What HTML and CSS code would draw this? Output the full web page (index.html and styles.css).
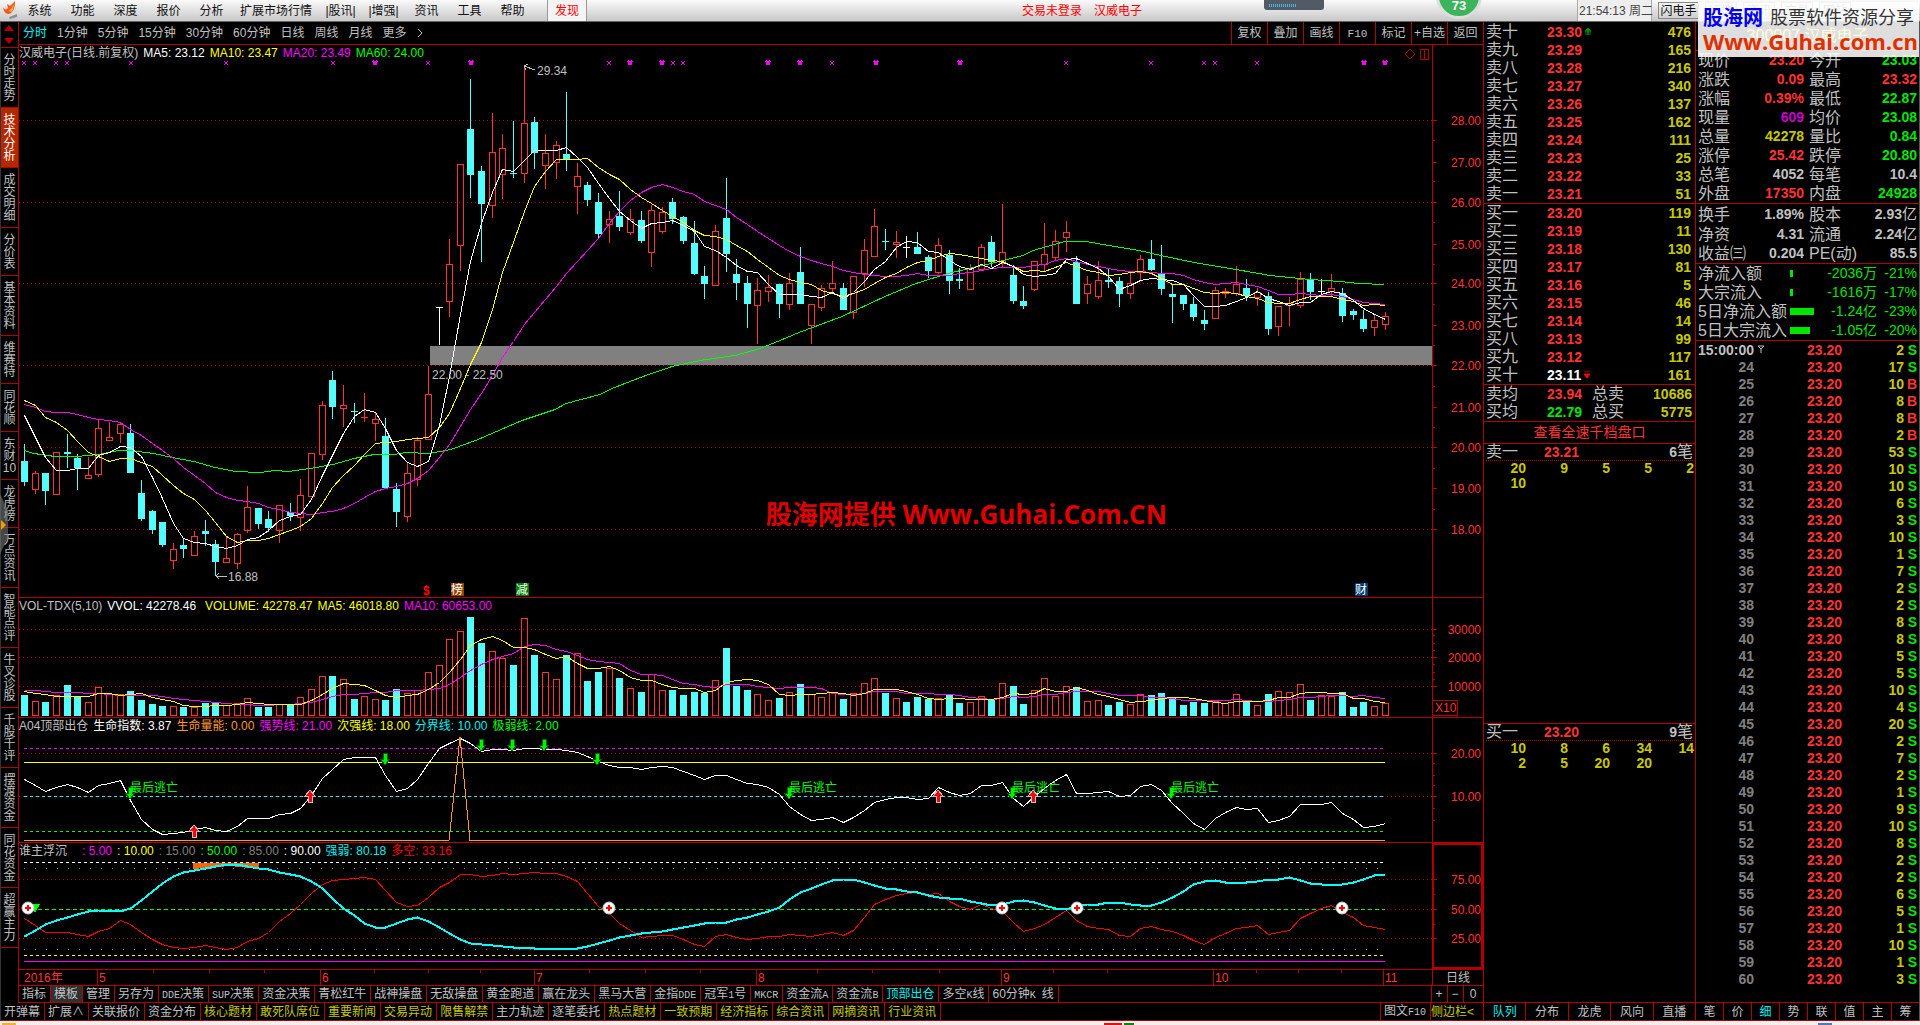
FILE: index.html
```html
<!DOCTYPE html>
<html lang="zh-CN">
<head>
<meta charset="utf-8">
<meta name="viewport" content="width=device-width, initial-scale=1">
<title>汉威电子 日线</title>
<link rel="stylesheet" href="styles.css">
</head>
<body>
<header class="topbar">
  <svg class="logo" viewBox="0 0 16 18" width="16" height="18"><path d="M2 7 13 4l2 9-9 4z" fill="#d8dade"/><path d="M7 16l8-3v3l-7 2z" fill="#8b8f94"/><path d="M1 6c1 3 4 3 5 1L5 3l3 2 5-5c0 6-1 9-4 12-3 2-7 1-8-6z" fill="#f05a14"/><path d="M7 9c2-1 4-4 5-6 0 4-1 7-3 8-1 0-2-1-2-2z" fill="#ffa040"/></svg>
  <nav class="menu">
    <button>系统</button><button>功能</button><button>深度</button><button>报价</button><button>分析</button><button class="wide">扩展市场行情</button><button>|股讯|</button><button>|增强|</button><button>资讯</button><button>工具</button><button>帮助</button><button class="found">发现</button>
  </nav>
  <p class="account"><span>交易未登录</span><span>汉威电子</span></p>
  <div class="top-right">
    <div class="led"><i></i></div>
    <div class="score"><span>73</span></div>
    <time class="clock">21:54:13 周二</time>
    <button class="trader">闪电手</button>
    <div class="ghosts"><button>行情</button><button>资讯</button><button>交易</button><button>网站</button></div>
  </div>
  <div class="brand">
    <p class="brand-line"><b>股海网</b><span>股票软件资源分享</span></p>
    <p class="brand-url">Www.Guhai.com.cn</p>
  </div>
</header>

<main class="main">
  <div class="left">
    <nav class="side">
      <div class="arrows"><svg viewBox="0 0 14 24" width="14" height="24"><path d="M7 3l5 6H2zM7 22l-5-6h10z" fill="#b40000"/></svg></div>
      <button>分时走势</button><button class="on">技术分析</button><button>成交明细</button><button>分价表</button><button>基本资料</button><button>维赛特</button><button>同花顺</button><button>东财10</button><button>龙虎榜</button><button>万点资讯</button><button>智能点评</button><button>牛叉诊股</button><button>千股千评</button><button>摆渡资金</button><button>同花资金</button><button>超赢主力</button>
      <svg class="pull" viewBox="0 0 10 60" width="10" height="60"><path d="M0 0l8 16v28l-8 16z" fill="#777" opacity=".6"/><path d="M1 26l5 5-5 5z" fill="#f0a000"/></svg>
    </nav>
    <section class="chart">
      <div class="periods">
        <button class="on">分时</button><button>1分钟</button><button>5分钟</button><button>15分钟</button><button>30分钟</button><button>60分钟</button><button>日线</button><button>周线</button><button>月线</button><button>更多</button><button class="more"><svg viewBox="0 0 6 10" width="6" height="10"><path d="M1 1l4 4-4 4" fill="none" stroke="#c0c0c0"/></svg></button>
        <div class="tools"><button>复权</button><button>叠加</button><button>画线</button><button><span class="lat">F10</span></button><button>标记</button><button>+自选</button><button>返回</button></div>
      </div>
      <div class="panes">
        <div class="pane"><svg id="price"></svg><p class="legend"><span>汉威电子(日线.前复权)</span><span class="w">MA5: 23.12</span><span class="y">MA10: 23.47</span><span class="m">MA20: 23.49</span><span class="g">MA60: 24.00</span></p><p class="stamp">股海网提供 Www.Guhai.Com.CN</p></div>
        <div class="pane"><svg id="volume"></svg><p class="legend"><span>VOL-TDX(5,10)</span><span class="w">VVOL: 42278.46</span><span class="y apart">VOLUME: 42278.47</span><span class="y">MA5: 46018.80</span><span class="m">MA10: 60653.00</span></p></div>
        <div class="pane"><svg id="life"></svg><p class="legend"><span>A04顶部出仓</span><span class="w">生命指数: 3.87</span><span class="o">生命量能: 0.00</span><span class="m">强势线: 21.00</span><span class="y">次强线: 18.00</span><span class="c">分界线: 10.00</span><span class="g">极弱线: 2.00</span></p></div>
        <div class="pane"><svg id="wave"></svg><p class="legend"><span>谁主浮沉</span><span class="m apart far">: 5.00</span><span class="y">: 10.00</span><span class="k">: 15.00</span><span class="g">: 50.00</span><span class="k">: 85.00</span><span class="w">: 90.00</span><span class="c">强弱: 80.18</span><span class="r">多空: 33.16</span></p></div>
        <div class="pane"><svg id="dates"></svg></div>
      </div>
      <div class="tabs">
        <button>指标</button><button class="lit">模板</button><button>管理</button><button>另存为</button><button><span class="lat">DDE</span>决策</button><button><span class="lat">SUP</span>决策</button><button>资金决策</button><button>青松红牛</button><button>战神操盘</button><button>无敌操盘</button><button>黄金跑道</button><button>赢在龙头</button><button>黑马大营</button><button>金指<span class="lat">DDE</span></button><button>冠军<span class="lat">1</span>号</button><button><span class="lat">MKCR</span></button><button>资金流<span class="lat">A</span></button><button>资金流<span class="lat">B</span></button><button class="c">顶部出仓</button><button>多空<span class="lat">K</span>线</button><button>60分钟<span class="lat">K </span>线</button>
        <div class="zoomers"><button>+</button><button>−</button><button>0</button></div>
      </div>
    </section>
    <div class="tabs tabs-wide">
      <button>开弹幕</button><button>扩展∧</button><button>关联报价</button><button>资金分布</button><button class="y">核心题材</button><button class="y">敢死队席位</button><button class="y">重要新闻</button><button class="y">交易异动</button><button class="y">限售解禁</button><button>主力轨迹</button><button>逐笔委托</button><button class="y">热点题材</button><button class="y">一致预期</button><button class="y">经济指标</button><button class="y">综合资讯</button><button class="y">网摘资讯</button><button class="y">行业资讯</button>
      <div class="side-toggle"><button>图文<span class="lat">F10</span></button><button class="y">侧边栏&lt;</button></div>
    </div>
  </div>

  <section class="book">
    <table id="asks"></table>
    <table id="bids"></table>
    <table id="averages"></table>
    <a class="depth" href="#depth">查看全速千档盘口</a>
    <div class="queue" id="askQueue"></div>
    <div class="queue" id="bidQueue"></div>
    <div class="tabs even"><button class="c">队列</button><button>分布</button><button>龙虎</button><button>风向</button><button>直播</button></div>
  </section>

  <section class="info">
    <h1 class="stock">300007 汉威电子</h1>
    <table id="quote"></table>
    <table id="basics"></table>
    <table id="flows"></table>
    <table id="ticks"></table>
    <div class="tabs even"><button>笔</button><button>价</button><button class="c">细</button><button>势</button><button>联</button><button>值</button><button>主</button><button>筹</button></div>
  </section>
</main>
<footer class="strip"><i class="s1"></i><i class="s2"></i><i class="s3"></i><i class="s4"></i></footer>
<script src="app.js"></script>
</body>
</html>
```
FILE: styles.css
```css
* { box-sizing: border-box; }
html, body { margin: 0; }
body {
  min-height: 100vh; display: grid; grid-template-rows: 22px 1fr 4px;
  background: #000; color: #c0c0c0;
  font: 12px/16px "Liberation Sans", "Noto Sans CJK SC", sans-serif;
}
p, h1 { margin: 0; }
button { margin: 0; padding: 0; border: 0; background: none; color: inherit; font: inherit; white-space: nowrap; }
table { border-collapse: collapse; width: 100%; table-layout: fixed; }
td, th { padding: 0; font-weight: normal; text-align: left; white-space: nowrap; overflow: hidden; }
.lat { font: 11px/16px "Liberation Mono", monospace; }
.w { color: #fff; } .y { color: #ff0; } .m { color: #f0f; } .g { color: #0f0; }
.o { color: #ff9632; } .c { color: #00f0f0; } .k { color: #808080; } .r { color: #f00; }

.topbar { position: relative; display: flex; background: linear-gradient(#fafafa, #c8c8c8); border-bottom: 1px solid #666; color: #111; }
.logo { margin: 1px 0 0 2px; flex: none; }
.menu { display: flex; }
.menu button { width: 43px; }
.menu .wide { width: 86px; }
.menu .found { width: 40px; margin-left: 13px; background: #f4f4f4; border: 1px solid #999; border-width: 0 1px; color: #f00; }
.account { display: flex; gap: 12px; margin-left: auto; padding-top: 3px; color: #f00; }
.top-right { width: 778px; padding-left: 122px; display: flex; }
.led { width: 60px; height: 10px; background: #525a66; border-radius: 0 0 3px 3px; padding: 4px 5px; }
.led i { display: block; width: 28px; height: 3px; background: repeating-linear-gradient(90deg, #4ab4e0 0 1px, #525a66 1px 2px); }
.score { width: 48px; height: 21px; margin-left: 112px; overflow: hidden; display: flex; align-items: flex-end; z-index: 2; }
.score span { width: 46px; height: 46px; flex: none; border-radius: 50%; border: 3px solid #d8e0d8; background: #3cb45c; color: #fff; font-size: 13px; font-weight: bold; text-align: center; padding-top: 22px; margin-bottom: 2px; }
.clock { width: 75px; margin-left: 93px; padding: 3px 1px; border: 1px solid #aaa; border-width: 0 1px; background: #eee; color: #444; white-space: nowrap; }
.trader { width: 41px; margin: 2px 0 2px 6px; border: 1px solid #888; }
.ghosts { display: flex; gap: 6px; margin: 2px 0 2px 6px; color: #666; }
.ghosts button { width: 32px; border: 1px solid #999; }
.brand { position: absolute; right: 1px; top: 2px; width: 221px; height: 55px; padding: 5px; background: rgba(255,255,255,.87); z-index: 3; }
.brand-line { display: flex; justify-content: space-between; align-items: center; height: 22px; }
.brand-line b { color: #00e; font-size: 20px; }
.brand-line span { color: #333; font-size: 18px; }
.brand-url { color: #e03000; font: bold 22px/24px "Open Sans", "Liberation Sans", sans-serif; text-align: center; white-space: nowrap; }

.main { display: flex; min-width: 0; }
.left { flex: 1; min-width: 0; display: grid; grid-template: minmax(0, 1fr) 18px / 19px minmax(0, 1fr); }
.side { position: relative; display: flex; flex-direction: column; border-left: 1px solid #333; border-right: 1px solid #b40000; }
.arrows { height: 26px; padding-left: 1px; border-bottom: 1px solid #b40000; }
.side button { padding: 6px 1px 5px; width: 17px; line-height: 12px; white-space: normal; word-break: break-all; border-bottom: 1px solid #b40000; }
.side .on { background: #b42800; color: #fff; }
.side .pull { position: absolute; left: -1px; top: 472px; }
.chart { display: flex; flex-direction: column; min-width: 0; }
.periods { display: flex; gap: 10px; height: 23px; padding-left: 4px; border-bottom: 1px solid #b40000; }
.periods .on { color: #00f0f0; }
.periods .more { display: flex; align-items: center; }
.tools { display: flex; margin-left: auto; }
.tools button { width: 36px; border-left: 1px solid #b40000; }
.panes { flex: 1; display: grid; grid-template-rows: 553fr 120fr 125fr 127fr 16px; }
.pane { position: relative; min-height: 0; border-bottom: 1px solid #b40000; }
.pane > svg { position: absolute; inset: 0; width: 100%; height: 100%; shape-rendering: crispEdges; }
.legend { position: absolute; left: 0; top: 0; display: flex; gap: 5px; white-space: nowrap; }
.legend .apart { margin-left: 4px; }
.legend .far { margin-left: 10px; }
.stamp { position: absolute; top: 82%; left: 51%; color: #e00000; font: bold 26px/32px "Open Sans", "Noto Sans CJK SC", sans-serif; white-space: nowrap; }
svg text { font-size: 12px; }

.tabs { display: flex; height: 17px; border-bottom: 1px solid #b40000; line-height: 16px; }
.tabs button { padding: 0 4px 0 3px; border-right: 1px solid #b40000; line-height: 16px; }
.tabs .lat { font-size: 10px; }
.tabs .y { color: #c8c800; }
.lit { background: #303030; }
.tabs-wide { grid-column: 1 / 3; height: 18px; border-left: 1px solid #333; }
.zoomers { display: flex; margin-left: auto; border-left: 1px solid #b40000; }
.zoomers button { width: 16px; }
.zoomers button:last-child { width: 19px; border: 0; }
.side-toggle { display: flex; margin-left: auto; border-left: 1px solid #b40000; }
.side-toggle button:last-child { width: 52px; padding: 0; border: 0; text-align: left; }
.even { height: 19px; border-top: 1px solid #b40000; }
.even button { flex: 1; padding: 0; }
.even button:last-child { border-right: 0; }

.book { width: 212px; flex: none; display: flex; flex-direction: column; border-left: 1px solid #b40000; padding-top: 1px; }
.book table { border-bottom: 1px solid #b40000; }
.book td, .book th { height: 18px; font-size: 14px; line-height: 18px; font-weight: bold; }
.book th, .info th { font-size: 16px; font-weight: normal; }
.book th { padding-left: 2px; }
td.num { text-align: right; }
.up { color: #ff3232; } .down { color: #00e600; } .vol { color: #c8c800; } .pur { color: #c800c8; } .white { color: #fff; } .gray { color: #808080; } .plain { color: #c0c0c0; }
.mark { display: inline-block; margin-left: 3px; vertical-align: 2px; }
.depth { height: 22px; line-height: 21px; border-bottom: 1px solid #b40000; color: #ff3232; font-size: 14px; text-align: center; text-decoration: none; }
.queue { flex: 1; }
.queue + .queue { border-top: 1px solid #b40000; }
.queue-head { display: grid; grid-template-columns: 58px 1fr auto; height: 17px; margin: 0 2px; border-bottom: 1px dotted #b40000; font: bold 14px/16px "Liberation Sans", "Noto Sans CJK SC", sans-serif; }
.queue-head span:first-child, .queue-head em { font-size: 16px; font-weight: normal; font-style: normal; }
.queue-body { display: grid; grid-template-columns: repeat(5, 42px); font: bold 14px/15px "Liberation Sans", sans-serif; text-align: right; color: #c8c800; }

.info { width: 225px; flex: none; display: flex; flex-direction: column; border-left: 1px solid #b40000; border-right: 1px solid #555; }
.stock { height: 29px; border-bottom: 1px solid #b40000; color: #ff0; font: 16px/28px "Liberation Sans", "Noto Sans CJK SC", sans-serif; text-align: center; }
.info table { border-bottom: 1px solid #b40000; }
.info th { height: 19px; line-height: 19px; padding-left: 2px; }
.info td { height: 19px; line-height: 19px; font-size: 14px; font-weight: bold; }
.info td em { font-style: normal; font-weight: normal; font-size: 15px; }
.info td:last-child { padding-right: 2px; }
#flows td { font-weight: normal; font-size: 14px; }
#flows i { display: block; height: 7px; background: #00e600; }
#ticks { border: 0; margin-top: 1px; margin-bottom: auto; }
#ticks td { height: 17px; line-height: 17px; }

.strip { background: #f0f0f0; display: flex; align-items: flex-end; }
.strip i { height: 2px; }
.s1 { width: 14px; margin-left: 2px; background: #f0b428; }
.s2 { width: 18px; margin-left: 1088px; background: #e01010; }
.s3 { width: 10px; margin-left: 2px; background: #108010; }
.s4 { width: 14px; margin-left: 684px; background: #5078b4; }
```
FILE: app.js
```js
const $ = id => document.getElementById(id);

/* ---------- tables ---------- */
const nums = '十九八七六五四三二一';
const td = (t, c = '', span = 1) => `<td class="${c}"${span > 1 ? ` colspan="${span}"` : ''}>${t}</td>`;
const cols = (...w) => '<colgroup>' + w.map(v => `<col style="width:${v}px">`).join('') + '</colgroup>';
const mark = (color, flip) => `<svg class="mark" width="6" height="7" viewBox="0 0 6 7"><path d="${flip ? 'M0 0h6M0 3h6L3 7z' : 'M3 0l3 3H0zM0 4h6M0 6h6M3 3v4'}" fill="${color}" stroke="${color}"/></svg>`;

const askVol = [476, 165, 216, 340, 137, 162, 111, 25, 33, 51];
const bidVol = [119, 11, 130, 81, 5, 46, 14, 99, 117, 161];
const bookCols = cols(63, 60, 84, 4);
$('asks').innerHTML = bookCols + askVol.map((v, i) =>
  `<tr><th>卖${nums[i]}</th>${td((23.30 - i / 100).toFixed(2) + (i ? '' : mark('#008c00')), 'up')}${td(v, 'num vol')}<td></td></tr>`).join('');
$('bids').innerHTML = bookCols + bidVol.map((v, i) =>
  `<tr><th>买${nums[9 - i]}</th>${td((23.20 - i / 100).toFixed(2) + (i < 9 ? '' : mark('#ff0000', true)), i < 9 ? 'up' : 'white')}${td(v, 'num vol')}<td></td></tr>`).join('');
$('averages').innerHTML = cols(63, 43, 35, 67, 3) +
  `<tr><th>卖均</th>${td('23.94', 'up')}<th>总卖</th>${td('10686', 'num vol')}<td></td></tr>` +
  `<tr><th>买均</th>${td('22.79', 'down')}<th>总买</th>${td('5775', 'num vol')}<td></td></tr>`;

function queue(id, name, price, count, list) {
  $(id).innerHTML = `<div class="queue-head"><span>${name}</span><span class="up">${price}</span><span>${count}<em>笔</em></span></div>` +
    `<div class="queue-body">${list.map(v => `<span>${v}</span>`).join('')}</div>`;
}
queue('askQueue', '卖一', '23.21', 6, [20, 9, 5, 5, 2, 10]);
queue('bidQueue', '买一', '23.20', 9, [10, 8, 6, 34, 14, 2, 5, 20, 20]);

const pair = (a, av, ac, b, bv, bc) => `<tr><th>${a}</th>${td(av, 'num ' + ac)}<td></td><th>${b}</th>${td(bv, 'num ' + bc)}</tr>`;
$('quote').innerHTML = cols(52, 56, 3, 44, 68) + [
  ['现价', '23.20', 'up', '今开', '23.03', 'down'], ['涨跌', '0.09', 'up', '最高', '23.32', 'up'],
  ['涨幅', '0.39%', 'up', '最低', '22.87', 'down'], ['现量', '609', 'pur', '均价', '23.08', 'down'],
  ['总量', '42278', 'vol', '量比', '0.84', 'down'], ['涨停', '25.42', 'up', '跌停', '20.80', 'down'],
  ['总笔', '4052', 'plain', '每笔', '10.4', 'plain'], ['外盘', '17350', 'up', '内盘', '24928', 'down']
].map(r => pair(...r)).join('');
$('basics').innerHTML = cols(52, 56, 3, 52, 60) + [
  ['换手', '1.89%', 'plain', '股本', '2.93<em>亿</em>', 'plain'], ['净资', '4.31', 'plain', '流通', '2.24<em>亿</em>', 'plain'],
  ['收益㈢', '0.204', 'plain', 'PE(动)', '85.5', 'plain']
].map(r => pair(...r)).join('');
$('flows').innerHTML = cols(94, 30, 57, 42) + [
  ['净流入额', 3, '-2036万', '-21%'], ['大宗流入', 3, '-1616万', '-17%'],
  ['5日净流入额', 24, '-1.24亿', '-23%'], ['5日大宗流入', 20, '-1.05亿', '-20%']
].map(([n, w, v, p]) => `<tr><th>${n}</th><td><i style="width:${w}px"></i></td>${td(v, 'num down')}${td(p, 'num down')}</tr>`).join('');

const ticks = '2S 17S 10B 8B 8B 2B 53S 10S 10S 6S 3S 10S 1S 7S 2S 2S 8S 8S 5S 5S 10S 4S 20S 2S 7S 2S 1S 9S 10S 8S 2S 2S 6S 5S 1S 10S 1S 3S'.split(' ');
const funnel = '<svg class="mark" width="8" height="8" viewBox="0 0 8 8"><path d="M1 1h6L4 4zM4 4v4" fill="none" stroke="#c0c0c0"/></svg>';
$('ticks').innerHTML = cols(58, 20, 68, 62, 15) + ticks.map((t, i) => {
  const side = t.slice(-1);
  return `<tr>${td(i ? i + 23 : '15:00:00', 'num ' + (i ? 'gray' : 'plain'))}<td>${i ? '' : funnel}</td>` +
    `${td('23.20', 'num up')}${td(t.slice(0, -1), 'num vol')}${td(side, 'num ' + (side === 'S' ? 'down' : 'up'))}</tr>`;
}).join('');

/* ---------- chart data: high, body top, body bottom, low; C falling, R rising, W flat ---------- */
const candles = `C444,461,482,486 R471,473,489,494 C473,473,491,505 R452,452,494,494 C434,452,454,468 C454,458,468,490 R457,475,478,479 R419,428,474,477 R422,437,440,440 R422,424,433,443
C424,433,473,473 C480,493,519,521 C510,511,530,534 C522,522,545,547 R543,549,560,569 C538,545,549,558 R531,536,555,555 C520,531,534,546 C540,544,562,576 R536,558,562,562
R533,534,563,569 R486,507,530,533 C508,508,524,529 C511,519,528,532 R505,505,530,543 C503,512,516,521 R479,495,517,531 R453,453,496,496 R401,405,454,460 C371,380,407,419
R385,405,408,427 C403,411,412,423 R393,417,418,422 R413,419,423,441 C418,436,488,488 C483,489,512,527 R463,473,516,522 R437,440,479,486 R366,394,439,439 W307,307,308,345
R239,264,301,317 R164,164,245,271 C79,129,175,198 C166,171,204,262 R113,152,205,218 R134,148,174,199 C121,173,174,178 R65,123,173,183 C117,122,153,169 R134,153,165,189
R141,145,162,179 C92,154,160,171 R163,176,186,214 C182,185,200,206 C193,202,234,238 R211,219,224,243 C191,216,227,231 R209,219,232,235 C211,220,241,243 R205,210,252,267
R207,212,231,234 C198,202,219,224 C216,217,241,244 C221,243,274,275 C266,276,284,299 R225,231,285,285 C178,218,254,272 C259,274,283,300 C276,283,304,328 R278,290,305,344
R275,287,291,302 C284,284,304,318 R273,283,304,310 C247,272,304,304 R304,304,325,344 R285,288,307,311 R261,283,288,293 C283,288,310,310 R276,276,312,319 R239,250,273,287
R209,226,256,257 C229,241,242,250 R231,242,244,258 W236,247,248,258 C232,247,254,254 C255,257,271,278 R238,245,272,274 C250,255,281,294 C268,279,281,289 R264,268,289,289
R244,247,269,270 C236,242,262,267 R204,252,263,268 C265,275,301,304 C286,301,306,309 R261,261,289,291 R223,254,264,271 R230,241,257,260 R221,232,237,252 C256,262,304,304
R276,284,293,304 R261,280,296,299 C269,280,282,288 C277,281,294,307 R271,283,293,299 R255,259,272,280 C240,259,270,271 C245,274,289,295 C284,294,297,323 C295,295,304,310
C297,304,317,321 C310,320,324,330 R287,290,318,318 R288,291,293,298 R266,284,293,296 C279,288,296,301 R288,292,297,306 C292,296,329,335 R306,306,326,336 R297,303,305,326
R272,279,305,308 C273,279,292,300 W279,291,292,297 R274,288,291,296 C288,293,316,322 C309,311,315,320 C310,319,329,332 R315,320,327,336 R312,316,324,330`
  .trim().split(/\s+/).map(s => [s[0], ...s.slice(1).split(',').map(Number)]);
const vols = [695,701,702,695,685,697,702,687,694,694,691,700,704,706,706,707,707,703,703,705,703,698,707,707,704,704,697,689,676,676,679,699,696,699,700,689,693,690,672,665,639,631,617,643,651,658,665,618,655,672,679,655,653,681,672,668,678,688,692,674,690,690,695,692,693,680,648,686,690,694,700,698,692,684,694,697,692,699,693,683,678,693,698,702,697,699,698,695,703,702,696,700,683,686,704,690,678,696,686,687,701,700,705,702,704,694,695,693,697,705,702,703,701,703,694,702,705,694,691,692,684,700,695,696,692,707,702,706,703];
const life = [779,785,791,787,784,787,792,785,783,780,800,819,829,834,833,832,829,827,830,831,826,818,818,818,814,813,808,795,778,769,759,757,757,757,775,791,788,779,763,748,743,738,743,751,749,749,750,748,748,749,749,750,752,756,761,765,767,767,769,767,766,767,771,775,779,775,775,779,783,784,787,794,806,814,820,819,817,822,817,810,802,799,797,797,799,798,787,792,795,793,785,785,782,798,806,796,788,780,774,793,793,792,791,796,795,786,784,790,803,813,823,829,818,812,807,809,808,822,820,816,804,804,804,802,813,819,827,826,823];
const strong = [936,930,924,920,917,914,911,910,910,911,908,900,891,883,876,872,870,868,866,864,864,866,868,869,872,874,876,881,888,898,908,915,923,927,927,923,919,917,921,927,933,939,943,944,945,946,947,947,948,948,948,948,948,946,943,940,937,935,933,932,931,929,927,925,923,922,922,919,917,914,911,907,899,892,888,884,880,879,879,882,885,888,889,891,892,895,897,898,898,901,903,905,904,901,900,902,905,908,909,905,904,904,902,902,904,905,905,902,897,891,884,881,880,882,882,882,881,879,879,877,880,883,884,885,884,882,879,875,874];
const bulls = [918,925,932,932,932,934,936,931,928,920,924,932,939,944,947,948,947,945,947,949,947,941,938,932,921,913,904,893,884,880,879,878,877,879,890,902,906,905,897,887,882,874,874,876,875,873,874,873,872,873,873,876,881,893,906,913,923,930,937,936,935,935,939,944,946,936,934,937,939,938,936,936,934,935,936,934,932,935,930,917,904,899,895,893,892,894,893,901,906,909,904,908,911,922,931,928,924,917,910,920,926,928,929,935,936,928,926,929,931,935,940,944,937,933,928,927,925,934,932,930,918,913,908,905,912,917,925,927,929];

/* Running mean of n values; the first entries come from the earlier history. */
const mean = (a, n, head) => a.map((_, i) => i < head.length ? head[i]
  : a.slice(Math.max(0, i - n + 1), i + 1).reduce((s, v) => s + v, 0) / Math.min(n, i + 1));
const closes = candles.map(c => c[0] === 'C' ? c[3] : c[2]);
const ma5 = mean(closes, 5, [415, 437, 457, 470]);
const ma10 = mean(closes, 10, [400, 405, 417, 422, 430, 441, 452, 456, 461]);
const ma20 = mean(closes, 20, [404, 407, 411, 412, 412, 414, 417, 419, 420, 422, 429, 435, 443, 450, 458, 467, 475, 483, 492]);
const ma60 = [[24,450],[34,453],[55,456],[77,456],[98,454],[119,450],[130,450],[154,453],[172,457],[194,461],[215,467],[236,471],[260,472],[275,470],[289,471],[310,468],[333,464],[354,458],[374,454],[394,454],[406,452],[429,453],[451,449],[478,439],[522,420],[555,409],[566,403],[600,394],[612,388],[643,376],[672,366],[700,360],[735,355],[760,348],[780,340],[799,332],[842,316],[885,296],[916,283],[948,273],[969,268],[991,263],[1011,258],[1023,255],[1033,250],[1054,244],[1065,241],[1086,241],[1109,245],[1139,250],[1161,255],[1194,262],[1236,269],[1270,275],[1310,279],[1340,281],[1359,283],[1384,284]];
const vma5 = mean(vols, 5, [691, 693, 694, 696]);
const vma10 = mean(vols, 10, [690, 690, 691, 692, 692, 692, 693, 693, 694]);
const RED = '#b40000', UP = '#ff3232', DOWN = '#54fcfc';

function pane(id, top, base, draw) {
  const svg = $(id), W = svg.clientWidth, H = svg.clientHeight;
  const axis = W - 51;
  const X = v => Math.round((v - 19) * axis / 1413), Y = v => Math.round((v - top) * H / base);
  const at = i => X(24 + i * 10.63);
  const out = [];
  const p = {
    W, H, axis, X, Y, at,
    put: s => out.push(s),
    h: (y, color, dash = '', x1 = 0, x2 = axis, w = 1) => out.push(`<path d="M${x1} ${Y(y) + .5}H${x2}" stroke="${color}" stroke-width="${w}" stroke-dasharray="${dash}"/>`),
    line: (pts, color, w = 1) => out.push(`<polyline points="${pts.map(q => q.join()).join(' ')}" fill="none" stroke="${color}" stroke-width="${w}"/>`),
    series: (a, color, w) => p.line(a.map((v, i) => [at(i) + .5, Y(v) + .5]), color, w),
    text: (x, y, t, color, extra = '') => out.push(`<text x="${x}" y="${y}" fill="${color}" ${extra}>${t}</text>`),
    scale: (y, t) => { p.tick(y, 5); p.text(W - 2, Y(y) + 5, t, UP, 'text-anchor="end"'); },
    tick: (y, n) => out.push(`<path d="M${axis} ${Y(y) + .5}h${n}" stroke="${RED}"/>`)
  };
  if (id !== 'dates') out.push(`<path d="M${axis + .5} 0V${H}" stroke="${RED}"/>`);
  draw(p);
  svg.innerHTML = out.join('');
}
const arrowDown = (x, y) => `<path d="M${x - 2} ${y - 6}h4v6h3l-5 6-5-6h3z" fill="#00f000" stroke="#006400"/>`;
const arrowUp = (x, y) => `<path d="M${x - 2} ${y + 6}h4v-6h3l-5-6-5 6h3z" fill="#f00" stroke="#c0c0c0"/>`;

function drawAll() {
  pane('price', 45, 552, p => {
    [120, 202, 283, 365, 447, 529].forEach((y, i) => { p.h(y, RED, '1 3'); p.scale(y, (28 - 2 * i).toFixed(2)); });
    [162, 244, 325, 407, 488].forEach((y, i) => p.scale(y, (27 - 2 * i).toFixed(2)));
    [140, 181, 222, 264, 304, 345, 386, 427, 468, 509].forEach(y => p.tick(y, 3));
    p.put(`<rect x="${p.X(430)}" y="${p.Y(346)}" width="${p.axis - p.X(430)}" height="${p.Y(365) - p.Y(346)}" fill="#808080"/>`);
    candles.forEach(([t, hi, a, b, lo], i) => {
      const x = p.at(i), h = Math.max(1, p.Y(b) - p.Y(a)), c = t === 'C' ? DOWN : t === 'W' ? '#fff' : UP;
      if (t === 'R' && h > 1) {
        p.put(`<path d="M${x + .5} ${p.Y(hi)}V${p.Y(a)}M${x + .5} ${p.Y(b)}V${p.Y(lo)}" stroke="${c}"/>`);
        p.put(`<rect x="${x - 2.5}" y="${p.Y(a) + .5}" width="6" height="${h}" fill="none" stroke="${c}"/>`);
      } else {
        p.put(`<path d="M${x + .5} ${p.Y(hi)}V${p.Y(lo)}" stroke="${c}"/>`);
        p.put(`<rect x="${x - 3}" y="${p.Y(a)}" width="7" height="${h}" fill="${c}"/>`);
      }
    });
    p.line(ma60.map(([x, y]) => [p.X(x), p.Y(y) + .5]), '#0f0');
    p.series(ma20, '#f0f'); p.series(ma10, '#ff0'); p.series(ma5, '#fff');
    const bold = [375, 471, 630, 662, 768, 800, 876, 960, 1364, 1385];
    [24, 35, 56, 67, 131, 226, 333, 428, 609, 673, 683, 832, 1066, 1151, 1204, 1215, 1257, ...bold].forEach(v => {
      const x = p.X(v), y = p.Y(63), b = bold.includes(v);
      p.put(`<path d="M${x - 2} ${y - 2}l4 4m0-4l-4 4" stroke="#f0f" stroke-width="${b ? 2 : 1}"/>`);
    });
    const g = '#c0c0c0';
    p.text(p.X(537), p.Y(75), '29.34', g);
    p.put(`<path d="M${p.X(524)} ${p.Y(66)}l11 4m-7-6l-4 2 2 4" stroke="${g}" fill="none"/>`);
    p.text(p.X(228), p.Y(581), '16.88', g);
    p.put(`<path d="M${p.X(227)} ${p.Y(576)}h-11m3-3l-3 3 3 3" stroke="${g}" fill="none"/>`);
    p.text(p.X(432), p.Y(379), '22.00 - 22.50', g);
    [[451, '榜', '#8c4600'], [516, '减', '#008000'], [1355, '财', '#003c78']].forEach(([x, t, c]) => {
      p.put(`<rect x="${p.X(x)}" y="${p.Y(583)}" width="13" height="13" fill="${c}"/>`);
      p.text(p.X(x), p.Y(594), t, '#fff');
    });
    p.text(p.X(426) - 3, p.Y(595), '$', '#f00', 'font-weight="bold"');
    p.put(`<path d="M${p.X(426) - 3} ${p.Y(588)}h6l-3-3z" fill="#f00"/>`);
    p.put(`<path d="M${p.axis - 22} ${p.Y(49)}l5 5-5 5-5-5zM${p.axis - 11.5} ${p.Y(49) + .5}h8v10h-8zm4 0v10" fill="none" stroke="${RED}"/>`);
  });
  pane('volume', 598, 119, p => {
    [629, 657, 686].forEach((y, i) => { p.h(y, RED, '1 3'); p.scale(y, 30000 - 10000 * i); });
    [635, 643, 650, 664, 672, 679].forEach(y => p.tick(y, 3));
    vols.forEach((v, i) => {
      const x = p.at(i), h = p.Y(716) - p.Y(v), cyan = candles[i][0] === 'C' || i === 83;
      p.put(cyan ? `<rect x="${x - 3}" y="${p.Y(v)}" width="7" height="${h}" fill="${DOWN}"/>`
        : `<rect x="${x - 2.5}" y="${p.Y(v) + .5}" width="6" height="${h - 1}" fill="none" stroke="${UP}"/>`);
    });
    p.series(vma10, '#f0f'); p.series(vma5, '#ff0');
    p.put(`<rect x="${p.axis + .5}" y="${p.Y(700) + .5}" width="25" height="15" fill="#000" stroke="${RED}"/>`);
    p.text(p.axis + 3, p.Y(712), 'X10', UP);
  });
  pane('life', 718, 124, p => {
    const a = p.at(0), b = p.at(128);
    p.h(753, RED, '1 3'); p.h(796, RED, '1 3');
    p.scale(753, '20.00'); p.scale(796, '10.00');
    [763, 775, 785, 808, 820].forEach(y => p.tick(y, 3));
    p.h(748, '#f0f', '3 3', a, b); p.h(762, '#ff0', '', a, b); p.h(796, '#0ff', '3 3', a, b); p.h(831, '#0f0', '3 3', a, b);
    p.series(life, '#fff');
    p.line([[a, p.Y(840) + .5], [p.X(449), p.Y(840) + .5], [p.X(460), p.Y(737)], [p.X(470), p.Y(840) + .5], [b, p.Y(840) + .5]], '#ff9632');
    [[385, 759], [481, 745], [512, 745], [544, 745], [597, 759]].forEach(([x, y]) => p.put(arrowDown(p.X(x), p.Y(y))));
    [[130, 793], [789, 793], [1012, 793], [1171, 793]].forEach(([x, y]) => {
      p.put(arrowDown(p.X(x), p.Y(y))); p.text(p.X(x), p.Y(792), '最后逃亡', '#0f0');
    });
    [[194, 831], [310, 796], [938, 796], [1033, 796]].forEach(([x, y]) => p.put(arrowUp(p.X(x), p.Y(y))));
  });
  pane('wave', 843, 126, p => {
    const a = p.at(0), b = p.at(128);
    p.h(879, RED, '1 3'); p.h(938, RED, '1 3'); p.h(909, RED, '1 3');
    p.scale(879, '75.00'); p.scale(909, '50.00'); p.scale(938, '25.00');
    p.tick(894, 3); p.tick(924, 3);
    p.h(862, '#fff', '3 3', a, b); p.h(868, '#808080', '1 10', a, b); p.h(909, '#0f0', '4 3', a, b);
    p.h(949, '#808080', '1 10', a, b); p.h(955, '#ff0', '3 3', a, b); p.h(961, '#f0f', '', a, b);
    p.put(`<path d="M${p.X(193)} ${p.Y(863)}h66v6l-29-3-37 3z" fill="#ff6400"/>`);
    p.series(bulls, '#f00'); p.series(strong, '#0ff', 2);
    p.put(`<path d="M${p.X(30)} ${p.Y(904)}h10l-5 9z" fill="#0f0"/>`);
    [28, 609, 1002, 1077, 1342].forEach(v => {
      const x = p.X(v), y = p.Y(908);
      p.put(`<g shape-rendering="auto"><circle cx="${x}" cy="${y}" r="6" fill="#fff" stroke="#c8c8c8"/><path d="M${x - 3} ${y}h6M${x} ${y - 3}v6" stroke="#f00" stroke-width="2"/></g>`);
    });
    p.put(`<rect x="${p.axis + 1}" y="1" width="${p.W - p.axis - 2}" height="${p.H - 2}" fill="none" stroke="${RED}" stroke-width="2"/>`);
  });
  pane('dates', 970, 15, p => {
    p.text(p.X(24), 12, '2016年', UP);
    [[97, 5], [320, 6], [534, 7], [756, 8], [1001, 9], [1213, 10], [1383, 11]].forEach(([x, t]) => {
      p.put(`<path d="M${p.X(x) + .5} 0V15" stroke="${RED}"/>`);
      p.text(p.X(x) + 2, 12, t, UP);
    });
    [153, 209, 264, 374, 428, 480, 589, 645, 700, 817, 872, 939, 1053, 1107, 1256, 1298, 1341].forEach(x => p.put(`<path d="M${p.X(x) + .5} 0v3" stroke="${RED}"/>`));
    p.put(`<path d="M${p.axis + .5} 0V15" stroke="${RED}"/>`);
    p.text(p.axis + 26, 12, '日线', '#c0c0c0', 'text-anchor="middle"');
  });
}
drawAll();
addEventListener('resize', drawAll);
```
